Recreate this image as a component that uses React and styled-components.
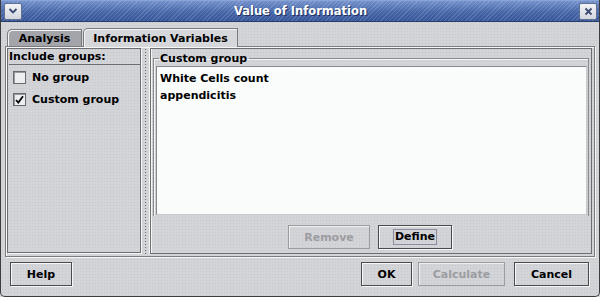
import React from "react";
import styled, { createGlobalStyle } from "styled-components";

const Global = createGlobalStyle`
  * { box-sizing: border-box; }
  body {
    margin: 0;
    background: #d5d5d8;
    font-family: "DejaVu Sans", "Liberation Sans", sans-serif;
  }
`;

const Window = styled.div`
  width: 600px;
  height: 297px;
  display: flex;
  flex-direction: column;
  background-color: #d3d4d8;
  background-image: radial-gradient(#c6c7cb 0.6px, transparent 0.8px);
  background-size: 3px 3px;
  border: 1px solid #3c3c3c;
  border-top: none;
  border-radius: 0 0 5px 5px;
  overflow: hidden;
  color: #000;
`;

const TitleBar = styled.div`
  height: 22px;
  flex: none;
  display: flex;
  align-items: center;
  justify-content: space-between;
  padding: 0 2px 0 3px;
  background:
    repeating-linear-gradient(
      135deg,
      rgba(255, 255, 255, 0.14) 0 1px,
      transparent 1px 3px
    ),
    linear-gradient(#7290cc, #4565a6 55%, #38569a);
  border-bottom: 1px solid #2a3e6a;
  border-top: 1px solid #8aa4d8;
`;

const Title = styled.div`
  flex: 1;
  text-align: center;
  color: #fff;
  font-weight: bold;
  font-size: 11.5px;
  text-shadow: 1px 1px 0 #1f3060;
`;

const TitleButton = styled.div`
  width: 18px;
  height: 17px;
  display: flex;
  align-items: center;
  justify-content: center;
  background: linear-gradient(#f2f3f6, #d2d6de);
  border: 1px solid #5e6f92;
  border-radius: 2px;
`;

const Body = styled.div`
  flex: 1;
  display: flex;
  flex-direction: column;
  padding: 5px 4px 0 4px;
`;

const Tabs = styled.div`
  display: flex;
  align-items: flex-end;
  padding-left: 2px;
  height: 19px;
  gap: 1px;
`;

const Tab = styled.div`
  height: ${(p) => (p.$active ? "19px" : "17px")};
  width: ${(p) => p.$w}px;
  display: flex;
  align-items: center;
  justify-content: center;
  font-size: 11px;
  font-weight: bold;
  background: ${(p) => (p.$active ? "#d6d7da" : "#a4a5ab")};
  border: 1px solid #7a7a7e;
  border-bottom: none;
  border-top-left-radius: 5px;
  box-shadow: inset 1px 1px 0 #f4f4f4;
  position: relative;
  margin-bottom: ${(p) => (p.$active ? "-1px" : "0")};
  z-index: ${(p) => (p.$active ? 2 : 1)};
`;

const Pane = styled.div`
  height: 211px;
  display: flex;
  padding: 1px 2px 2px 1px;
  border: 1px solid #7c7c80;
  box-shadow: inset 1px 1px 0 #f6f6f6, 1px 1px 0 #f6f6f6;
`;

const LeftPanel = styled.div`
  width: 134px;
  margin-bottom: 1px;
  border: 1px solid #6e6e72;
  box-shadow: 1px 1px 0 #f6f6f6;
  padding: 1px 0 0 1px;
  display: flex;
  flex-direction: column;
`;

const GroupLabel = styled.div`
  font-size: 11px;
  font-weight: bold;
  height: 15px;
  line-height: 14px;
  border-bottom: 1px solid #6e6e72;
`;

const CheckList = styled.div`
  display: flex;
  flex-direction: column;
  gap: 8px;
  padding: 5px 0 0 4px;
`;

const CheckRow = styled.div`
  display: flex;
  align-items: center;
  gap: 6px;
  font-size: 11px;
  font-weight: bold;
  height: 14px;
`;

const Box = styled.div`
  width: 13px;
  height: 13px;
  background: #eceef0;
  border: 1px solid #6a6a6e;
  box-shadow: inset 1px 1px 0 #9a9a9e;
  display: flex;
  align-items: center;
  justify-content: center;
`;

const Splitter = styled.div`
  width: 9px;
  background-image: radial-gradient(#6a6a70 0.7px, transparent 0.9px);
  background-size: 3px 3px;
  background-position: 3px 0;
  background-repeat: repeat;
  background-clip: content-box;
  padding: 0 2px 0 3px;
  border-right: 1px solid #f4f4f4;
`;

const RightPanel = styled.div`
  flex: 1;
  border: 1px solid #6e6e72;
  box-shadow: inset 1px 0 0 #f6f6f6;
  display: flex;
  flex-direction: column;
  padding: 3px 2px 4px 2px;
`;

const Fieldset = styled.fieldset`
  margin: 0;
  padding: 1px 1px 1px 2px;
  border: 1px solid #8a8a8e;
  border-bottom: none;
  box-shadow: inset 1px 1px 0 #f4f4f4;
  height: 166px;
  display: flex;
  flex-direction: column;
`;

const Legend = styled.legend`
  font-size: 11px;
  font-weight: bold;
  padding: 0 2px 0 1px;
  margin-left: 3px;
  line-height: 13px;
`;

const TextArea = styled.div`
  flex: 1;
  background: #fafcfc;
  border: 1px solid #8a8a8e;
  border-right-color: #c8c8cc;
  border-bottom-color: #c8c8cc;
  padding: 3px 3px;
  font-size: 11px;
  font-weight: bold;
  line-height: 17px;
`;

const ActionRow = styled.div`
  display: flex;
  justify-content: center;
  gap: 8px;
  padding-top: 9px;
  padding-right: 2px;
`;

const Button = styled.div`
  width: ${(p) => p.$w}px;
  height: 24px;
  display: flex;
  align-items: center;
  justify-content: center;
  font-size: 11px;
  font-weight: bold;
  color: ${(p) => (p.$disabled ? "#9c9ca0" : "#000")};
  border: 1px solid ${(p) => (p.$disabled ? "#9c9ca0" : "#4a4a4e")};
  box-shadow: ${(p) =>
    p.$disabled ? "inset 1px 1px 0 #eeeeee" : "inset 1px 1px 0 #f6f6f6, 1px 1px 0 #f6f6f6"};
  margin-left: ${(p) => p.$gap || 0}px;
`;

const Focus = styled.span`
  border: 1px solid #8a8ea0;
  padding: 0 1px;
  line-height: 14px;
`;

const Footer = styled.div`
  display: flex;
  align-items: center;
  padding: 5px 6px 0 5px;
  gap: 6px;
`;

const Spacer = styled.div`
  flex: 1;
`;

export default function App() {
  return (
    <>
      <Global />
      <Window>
        <TitleBar>
          <TitleButton>
            <svg width="10" height="8" viewBox="0 0 10 8">
              <path d="M1.5 2 L5 5.5 L8.5 2" stroke="#3a4a70" strokeWidth="1.8" fill="none" />
            </svg>
          </TitleButton>
          <Title>Value of Information</Title>
          <TitleButton>
            <svg width="9" height="9" viewBox="0 0 9 9">
              <path d="M1.5 1.5 L7.5 7.5 M7.5 1.5 L1.5 7.5" stroke="#3a4a70" strokeWidth="1.8" />
            </svg>
          </TitleButton>
        </TitleBar>
        <Body>
          <Tabs>
            <Tab $w={75}>Analysis</Tab>
            <Tab $active $w={155}>
              Information Variables
            </Tab>
          </Tabs>
          <Pane>
            <LeftPanel>
              <GroupLabel>Include groups:</GroupLabel>
              <CheckList>
                <CheckRow>
                  <Box />
                  No group
                </CheckRow>
                <CheckRow>
                  <Box>
                    <svg width="9" height="9" viewBox="0 0 9 9">
                      <path d="M1 5 L3.3 7.6 L8 1.2" stroke="#000" strokeWidth="1.7" fill="none" />
                    </svg>
                  </Box>
                  Custom group
                </CheckRow>
              </CheckList>
            </LeftPanel>
            <Splitter />
            <RightPanel>
              <Fieldset>
                <Legend>Custom group</Legend>
                <TextArea>
                  <div>White Cells count</div>
                  <div>appendicitis</div>
                </TextArea>
              </Fieldset>
              <ActionRow>
                <Button $w={82} $disabled>
                  Remove
                </Button>
                <Button $w={74}>
                  <Focus>Define</Focus>
                </Button>
              </ActionRow>
            </RightPanel>
          </Pane>
          <Footer>
            <Button $w={62}>Help</Button>
            <Spacer />
            <Button $w={51}>OK</Button>
            <Button $w={87} $disabled>
              Calculate
            </Button>
            <Button $w={75} $gap={3}>
              Cancel
            </Button>
          </Footer>
        </Body>
      </Window>
    </>
  );
}
